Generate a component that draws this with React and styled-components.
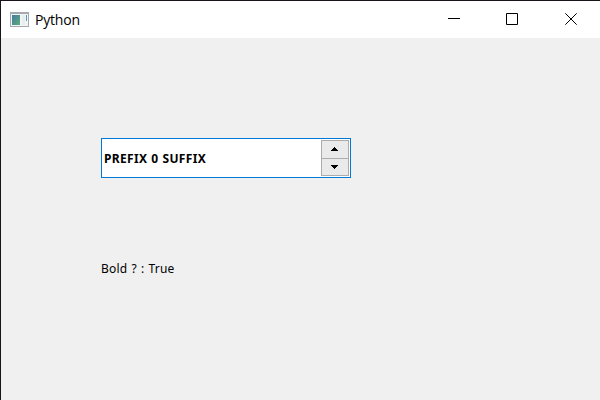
import React from "react";
import styled, { createGlobalStyle } from "styled-components";

const GlobalStyle = createGlobalStyle`
  * { box-sizing: border-box; }
  body { margin: 0; overflow: hidden; background: #f0f0f0; }
`;

const Window = styled.main`
  width: 600px;
  height: 400px;
  display: flex;
  flex-direction: column;
  border-top: 1px solid #18141a;
  border-left: 1px solid #18141a;
  background: #f0f0f0;
  color: #000;
`;

const TitleBar = styled.header`
  height: 37px;
  flex: none;
  display: flex;
  align-items: center;
  background: #fff;
  padding-left: 9px;
`;

const AppIcon = styled.svg`
  display: block;
  flex: none;
  margin-right: 5px;
`;

const Title = styled.h1`
  margin: 0;
  flex: 1;
  font: 400 14px/20px "Open Sans", sans-serif;
  letter-spacing: -0.2px;
`;

const Controls = styled.div`
  display: flex;
  height: 100%;
`;

const ControlButton = styled.button`
  width: ${(p) => p.$width}px;
  height: 37px;
  display: flex;
  align-items: flex-start;
  padding: 12px 0 0 ${(p) => p.$inset}px;
  border: 0;
  background: transparent;
`;

const Content = styled.section`
  flex: 1;
  display: flex;
  flex-direction: column;
  align-items: flex-start;
  padding: 100px 0 0 100px;
`;

const SpinBox = styled.div`
  width: 250px;
  height: 40px;
  display: flex;
  align-items: center;
  padding: 1px;
  border: 1px solid #0078d7;
  background: #fff;
`;

const Value = styled.span`
  flex: 1;
  padding: 2px 0 0 1px;
  font: 700 12px/18px "Noto Sans", sans-serif;
  letter-spacing: 0.32px;
  word-spacing: 0.6px;
  white-space: pre;
`;

const Steppers = styled.div`
  width: 28px;
  height: 36px;
  display: flex;
  flex-direction: column;
  border: 1px solid #acacac;
`;

const Stepper = styled.button`
  flex: 1;
  display: flex;
  align-items: flex-start;
  padding: 6px 0 0 9px;
  border: 0;
  background: #eaeaea;

  & + & { border-top: 1px solid #acacac; }
`;

const Status = styled.p`
  margin: 82px 0 0;
  font: 400 12px/18px "Noto Sans", sans-serif;
  letter-spacing: 0.2px;
  word-spacing: 0.8px;
  white-space: pre;
`;

export default function App() {
  return (
    <>
      <GlobalStyle />
      <Window>
        <TitleBar>
          <AppIcon width="20" height="16" viewBox="0 0 20 16" shapeRendering="crispEdges">
            <defs>
              <linearGradient id="screen" x1="0" y1="0" x2="1" y2="1">
                <stop offset="0" stopColor="#457ba2" />
                <stop offset="1" stopColor="#5bac78" />
              </linearGradient>
            </defs>
            <path d="M0 0h19v15H0z" fill="#a5aaae" />
            <path d="M1 2h17v12H1z" fill="#f2f4f5" />
            <path d="M2 3h8v10H2z" fill="url(#screen)" />
            <path d="M12 3h3v10h-3z" fill="#e8edf1" />
            <path d="M16 3h1v6h-1z" fill="#569cad" />
          </AppIcon>
          <Title>Python</Title>
          <Controls>
            <ControlButton $width={58} $inset={22} aria-label="Minimize">
              <svg width="12" height="12" shapeRendering="crispEdges">
                <path d="M0 5h12v1H0z" />
              </svg>
            </ControlButton>
            <ControlButton $width={59} $inset={22} aria-label="Maximize">
              <svg width="12" height="12">
                <path d="M.5.5h11v11H.5z" fill="none" stroke="#000" />
              </svg>
            </ControlButton>
            <ControlButton $width={57} $inset={22} aria-label="Close">
              <svg width="12" height="12">
                <path d="M.3.3l11.4 11.4M11.7.3L.3 11.7" fill="none" stroke="#000" strokeWidth="1" />
              </svg>
            </ControlButton>
          </Controls>
        </TitleBar>
        <Content>
          <SpinBox>
            <Value>PREFIX 0 SUFFIX</Value>
            <Steppers>
              <Stepper aria-label="Increase">
                <svg width="7" height="4" shapeRendering="crispEdges">
                  <path d="M3 0h1v1h1v1h1v1h1v1H0V3h1V2h1V1h1z" />
                </svg>
              </Stepper>
              <Stepper aria-label="Decrease">
                <svg width="7" height="4" shapeRendering="crispEdges">
                  <path d="M0 0h7v1H6v1H5v1H4v1H3V3H2V2H1V1H0z" />
                </svg>
              </Stepper>
            </Steppers>
          </SpinBox>
          <Status>Bold ? : True</Status>
        </Content>
      </Window>
    </>
  );
}
